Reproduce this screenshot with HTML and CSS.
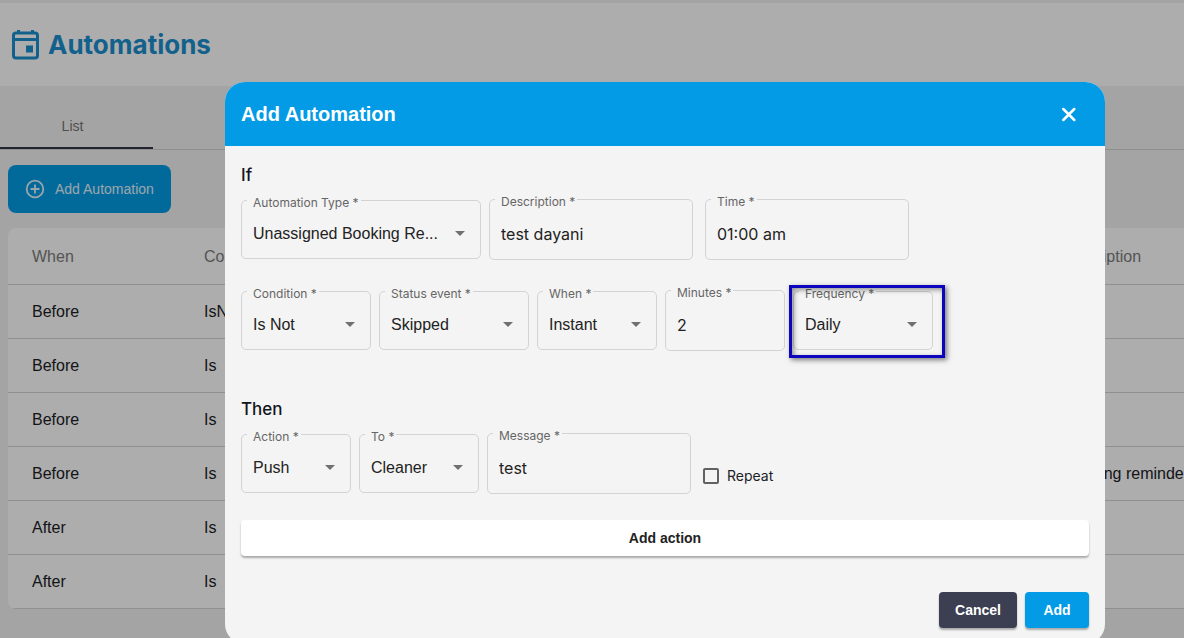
FILE: index.html
```html
<!DOCTYPE html>
<html lang="en">
<head>
<meta charset="utf-8">
<title>Automations</title>
<link rel="stylesheet" href="styles.css">
</head>
<body>
<div class="page">
  <header class="page-header">
    <svg class="page-icon" viewBox="0 0 28 30" width="28" height="30" aria-hidden="true">
      <rect x="1.5" y="3" width="24" height="25" rx="2.500" fill="none" stroke="currentColor" stroke-width="3"/>
      <path d="M6.500 0v4M20.500 0v4M2 9.500h23" stroke="currentColor" stroke-width="3"/>
      <rect x="14" y="15.500" width="7" height="7" fill="currentColor"/>
    </svg>
    <h1 class="page-title">Automations</h1>
  </header>
  <nav class="tabs"><button class="tab" type="button">List</button></nav>
  <main class="content">
    <button class="add-automation" type="button">
      <svg viewBox="0 0 20 20" width="20" height="20" fill="none" stroke="currentColor" stroke-width="1.8" aria-hidden="true"><circle cx="10" cy="10" r="8.300"/><path d="M10 5.500v9M5.500 10h9"/></svg>
      <span>Add Automation</span>
    </button>
    <div class="table-card">
      <table class="table">
        <colgroup><col class="col"><col class="col"><col class="col-rest"><col class="col-description"></colgroup>
        <thead><tr><th>When</th><th>Condition</th><th></th><th>Description</th></tr></thead>
        <tbody>
          <tr><td>Before</td><td>IsNot</td><td></td><td></td></tr>
          <tr><td>Before</td><td>Is</td><td></td><td></td></tr>
          <tr><td>Before</td><td>Is</td><td></td><td></td></tr>
          <tr><td>Before</td><td>Is</td><td></td><td>Ongoing reminder</td></tr>
          <tr><td>After</td><td>Is</td><td></td><td></td></tr>
          <tr><td>After</td><td>Is</td><td></td><td></td></tr>
        </tbody>
      </table>
    </div>
  </main>
</div>
<div class="backdrop">
  <form class="dialog" role="dialog" aria-labelledby="dialog-title">
    <div class="dialog-header">
      <h2 class="dialog-title" id="dialog-title">Add Automation</h2>
      <button class="close" type="button" aria-label="Close">
        <svg viewBox="0 0 16 16" width="16" height="16" fill="none" stroke="currentColor" stroke-width="2.500" stroke-linecap="round" aria-hidden="true"><path d="M2.300 3l11 11M13.300 3l-11 11"/></svg>
      </button>
    </div>
    <div class="dialog-body">
      <h3 class="section-title">If</h3>
      <div class="row">
        <div class="field field-240"><label for="type">Automation Type *</label><select id="type"><option>Unassigned Booking Re...</option></select></div>
        <div class="field field-204"><label for="description">Description *</label><input id="description" type="text" value="test dayani"></div>
        <div class="field field-204 field-spaced"><label for="time">Time *</label><input id="time" type="text" value="01:00 am"></div>
      </div>
      <div class="row row-second">
        <div class="field field-130"><label for="condition">Condition *</label><select id="condition"><option>Is Not</option></select></div>
        <div class="field field-150"><label for="status">Status event *</label><select id="status"><option>Skipped</option></select></div>
        <div class="field field-120"><label for="when">When *</label><select id="when"><option>Instant</option></select></div>
        <div class="field field-120"><label for="minutes">Minutes *</label><input id="minutes" type="text" value="2"></div>
        <div class="field field-140"><label for="frequency">Frequency *</label><select id="frequency"><option>Daily</option></select><span class="highlight"></span></div>
      </div>
      <h3 class="section-title section-then">Then</h3>
      <div class="row">
        <div class="field field-110"><label for="action">Action *</label><select id="action"><option>Push</option></select></div>
        <div class="field field-120"><label for="to">To *</label><select id="to"><option>Cleaner</option></select></div>
        <div class="field field-204"><label for="message">Message *</label><input id="message" type="text" value="test"></div>
        <div class="repeat"><input id="repeat" type="checkbox"><label for="repeat">Repeat</label></div>
      </div>
      <button class="button add-action" type="button">Add action</button>
      <div class="actions">
        <button class="button cancel" type="button">Cancel</button>
        <button class="button submit" type="submit">Add</button>
      </div>
    </div>
  </form>
</div>
</body>
</html>
```
FILE: styles.css
```css
* {
  box-sizing: border-box;
}

html,
body {
  margin: 0;
  height: 100%;
  overflow: hidden;
}

body {
  background: #f2f2f2;
  color: #1b2126;
  font-family: "Liberation Sans", Arial, sans-serif;
  font-size: 16px;
}

button,
input,
select {
  margin: 0;
  font: inherit;
}

h1,
h2,
h3 {
  margin: 0;
}

.page-header {
  display: flex;
  align-items: center;
  gap: 8px;
  height: 86px;
  padding: 0 12px;
  border-top: 3px solid #f0f0f0;
  background: #fff;
  color: #1b8fce;
}

.page-title {
  font-family: Inter, sans-serif;
  font-size: 26px;
  font-weight: 700;
  line-height: 32px;
}

.tabs {
  display: flex;
  height: 64px;
  border-bottom: 1px solid #d2d2d2;
}

.tab {
  width: 153px;
  padding: 18px 8px 0 0;
  border: 0;
  border-bottom: 2px solid #33364a;
  background: none;
  color: #757575;
  font-size: 14px;
}

.content {
  padding: 15px 0 0 8px;
}

.add-automation {
  display: flex;
  align-items: center;
  gap: 10px;
  height: 48px;
  padding: 0 17px;
  border: 0;
  border-radius: 8px;
  background: #039be5;
  color: #e4f4fc;
  font-size: 14px;
}

.table-card {
  margin-top: 15px;
  overflow: hidden;
  border-radius: 8px 0 0 8px;
  background: #fff;
}

.table {
  width: calc(100% + 40px);
  border-collapse: collapse;
  table-layout: fixed;
}

.col {
  width: 172px;
}

.col-description {
  width: 187px;
}

.table th,
.table td {
  height: 54px;
  padding: 2px 0 0 24px;
  border-bottom: 1px solid #d4d4d4;
  text-align: left;
  white-space: nowrap;
}

.table th {
  height: 56px;
  color: #7c7c7c;
  font-weight: 400;
}

.backdrop {
  position: fixed;
  inset: 0;
  padding: 82px 79px 0 225px;
  background: rgba(0, 0, 0, 0.32);
}

.dialog {
  overflow: hidden;
  border-radius: 20px;
  background: #f4f4f4;
}

.dialog-header {
  display: flex;
  align-items: center;
  justify-content: space-between;
  height: 64px;
  padding: 0 24px 0 16px;
  background: #039be5;
  color: #fff;
}

.dialog-title {
  font-size: 20px;
  font-weight: 700;
}

.close {
  display: flex;
  padding: 4px;
  border: 0;
  background: none;
  color: #fff;
}

.dialog-body {
  padding: 16px;
}

.section-title {
  padding-top: 1px;
  color: #12161c;
  font-family: Inter, sans-serif;
  font-size: 17px;
  font-weight: 500;
  line-height: 24px;
}

.section-then {
  margin-top: 45px;
}

.row {
  display: flex;
  align-items: center;
  gap: 8px;
  margin-top: 12px;
}

.row-second {
  margin-top: 30px;
}

.field {
  position: relative;
}

.field-110 { width: 110px; }
.field-120 { width: 120px; }
.field-130 { width: 130px; }
.field-140 { width: 140px; }
.field-150 { width: 150px; }
.field-204 { width: 204px; }
.field-240 { width: 240px; }

.field-spaced {
  margin-left: 4px;
}

.field label {
  position: absolute;
  top: -5px;
  left: 6px;
  padding: 0 2px 0 6px;
  background: #f4f4f4;
  color: #666;
  font-family: Inter, sans-serif;
  font-size: 12px;
  line-height: 16px;
}

.field input,
.field select {
  display: block;
  width: 100%;
  border: 1px solid #d3d3d3;
  border-radius: 5px;
  background: transparent;
  color: #222;
}

.field input {
  height: 61px;
  padding: 9px 11px 0;
  font-family: Inter, sans-serif;
}

.field select {
  height: 59px;
  padding: 8px 24px 0 11px;
  appearance: none;
}

.field:has(select)::after {
  content: "";
  position: absolute;
  top: 31px;
  right: 16px;
  border: 5px solid transparent;
  border-top-color: #707070;
  border-bottom: 0;
  pointer-events: none;
}

.highlight {
  position: absolute;
  inset: -6px -12px -8px -4px;
  border: 3px solid #0d05bd;
  box-shadow: 2px 2px 5px rgba(0, 0, 0, 0.5), inset 2px 2px 5px rgba(0, 0, 0, 0.4);
  pointer-events: none;
}

.repeat {
  display: flex;
  align-items: center;
  gap: 8px;
  margin: 24px 0 0 4px;
  font-family: Inter, sans-serif;
  font-size: 14px;
  line-height: 16px;
}

.repeat input {
  width: 16px;
  height: 16px;
  border: 2px solid #616161;
  border-radius: 2px;
  appearance: none;
}

.button {
  height: 36px;
  padding: 0 16px;
  border: 0;
  border-radius: 4px;
  box-shadow: 0 2px 2px rgba(0, 0, 0, 0.3);
  font-size: 14px;
  font-weight: 700;
}

.add-action {
  display: block;
  width: 100%;
  margin-top: 26px;
  background: #fff;
  color: #222;
}

.actions {
  display: flex;
  justify-content: flex-end;
  gap: 8px;
  margin-top: 36px;
}

.cancel {
  background: #3c3f52;
  color: #fff;
}

.submit {
  min-width: 64px;
  background: #039be5;
  color: #fff;
}
```
